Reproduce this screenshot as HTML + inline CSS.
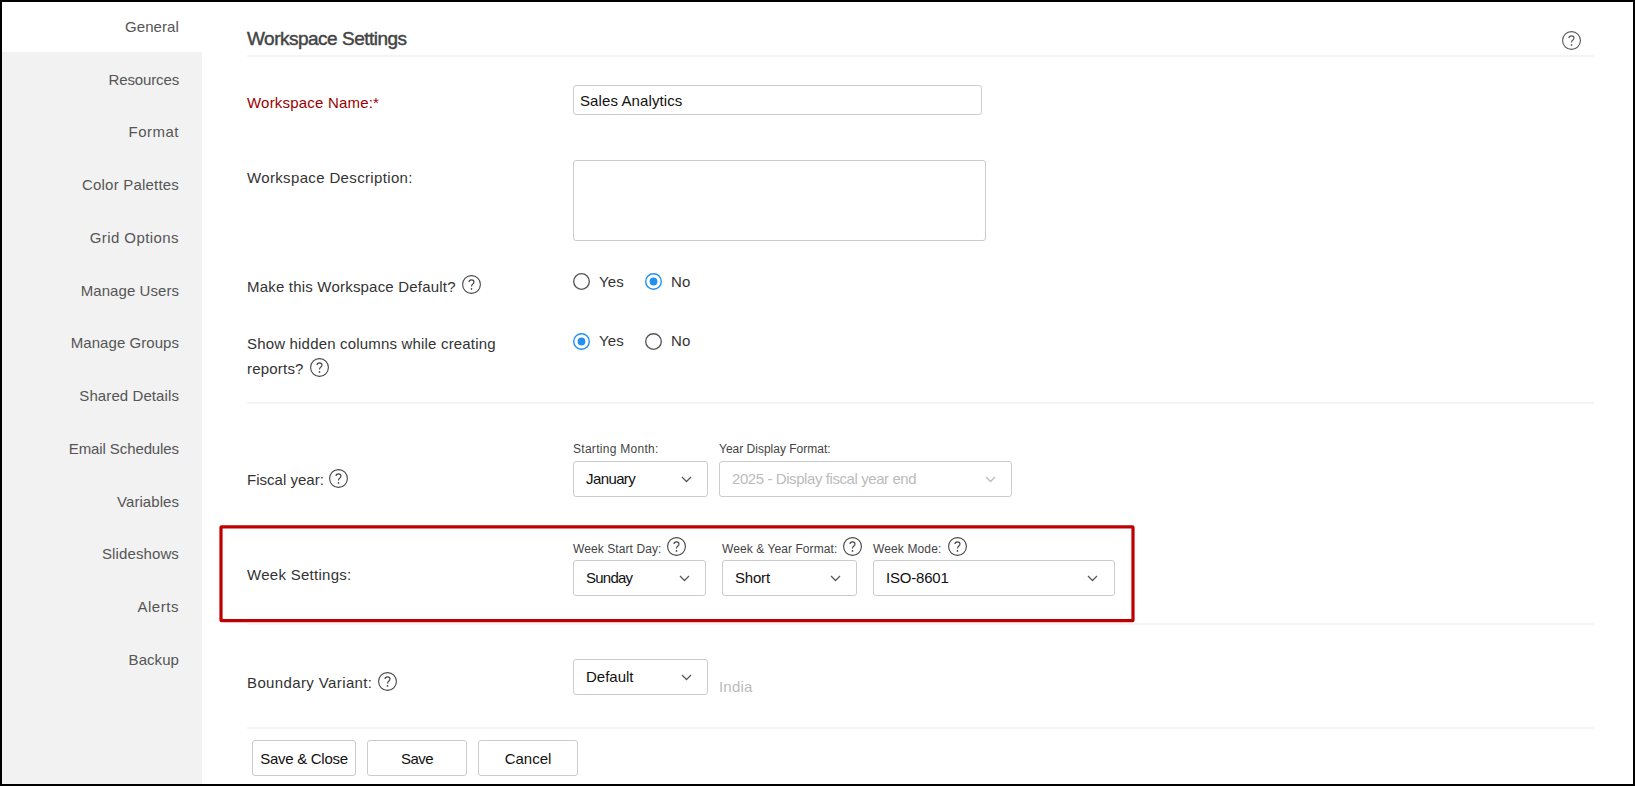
<!DOCTYPE html>
<html><head><meta charset="utf-8">
<style>
*{box-sizing:border-box;margin:0;padding:0}
html,body{width:1635px;height:786px;overflow:hidden;background:#000}
body{font-family:"Liberation Sans",sans-serif;position:relative}
#frame{position:absolute;left:2px;top:2px;width:1631px;height:782px;background:#fff;overflow:hidden}
.a{position:absolute;white-space:nowrap;line-height:1}
#side{position:absolute;left:0;top:50px;width:200px;height:740px;background:#f2f2f2}
.si{position:absolute;font-size:15px;color:#555;text-align:right;letter-spacing:0.2px}
.lbl{font-size:15px;color:#333;letter-spacing:0.2px}
.sep{position:absolute;left:245px;width:1347px;height:2px;background:#f4f4f4}
.box{position:absolute;border:1px solid #ccc;border-radius:3px;background:#fff}
.sel .t{position:absolute;left:12px;font-size:15px;color:#111;white-space:nowrap;line-height:1}
.chev{position:absolute}
.sm{font-size:12px;color:#444}
.q{position:absolute;width:19px;height:19px}.q svg{display:block}
.radio{position:absolute;width:17px;height:17px}.radio svg{display:block}
.btn{position:absolute;top:738px;height:36px;border:1px solid #ccc;border-radius:3px;background:#fff;font-size:15px;color:#111;text-align:center;line-height:35px}
</style></head>
<body>
<div id="frame">
  <div id="side"></div>
  <div class="a si" style="top:17px;right:1454px;letter-spacing:0.1px">General</div>
  <div class="a si" style="top:70px;right:1454px;letter-spacing:-0.13px">Resources</div>
  <div class="a si" style="top:122px;right:1454px;letter-spacing:0.48px">Format</div>
  <div class="a si" style="top:175px;right:1454px;letter-spacing:0.2px">Color Palettes</div>
  <div class="a si" style="top:228px;right:1454px;letter-spacing:0.43px">Grid Options</div>
  <div class="a si" style="top:281px;right:1454px;letter-spacing:0.06px">Manage Users</div>
  <div class="a si" style="top:333px;right:1454px;letter-spacing:0.05px">Manage Groups</div>
  <div class="a si" style="top:386px;right:1454px;letter-spacing:0.09px">Shared Details</div>
  <div class="a si" style="top:439px;right:1454px;letter-spacing:-0.1px">Email Schedules</div>
  <div class="a si" style="top:492px;right:1454px;letter-spacing:0.06px">Variables</div>
  <div class="a si" style="top:544px;right:1454px;letter-spacing:0.12px">Slideshows</div>
  <div class="a si" style="top:597px;right:1454px;letter-spacing:0.54px">Alerts</div>
  <div class="a si" style="top:650px;right:1454px;letter-spacing:0.06px">Backup</div>

  <div class="a" style="left:245px;top:27px;font-size:19px;letter-spacing:-0.5px;-webkit-text-stroke:0.45px #444;color:#444">Workspace Settings</div>
  <div class="q" style="left:1560px;top:29px"><svg width="19" height="19" viewBox="0 0 19 19"><circle cx="9.5" cy="9.5" r="8.9" fill="none" stroke="#555" stroke-width="1.1"/><path d="M7 7.1C7 5.7 8.1 4.9 9.5 4.9C10.9 4.9 12 5.8 12 7C12 8.1 11.3 8.7 10.6 9.2C9.9 9.8 9.5 10.4 9.5 11.5V11.3" fill="none" stroke="#555" stroke-width="1.15"/><circle cx="9.5" cy="13.95" r="0.85" fill="#555"/></svg></div>
  <div class="sep" style="top:53px"></div>

  <div class="a lbl" style="left:245px;top:93px;color:#9c0000">Workspace Name:*</div>
  <div class="box" style="left:571px;top:83px;width:409px;height:30px"></div>
  <div class="a" style="left:578px;top:91px;font-size:15px;color:#111;letter-spacing:0.1px">Sales Analytics</div>

  <div class="a lbl" style="left:245px;top:168px;letter-spacing:0.35px">Workspace Description:</div>
  <div class="box" style="left:571px;top:158px;width:413px;height:81px"></div>

  <div class="a lbl" style="left:245px;top:277px;letter-spacing:0.2px">Make this Workspace Default?</div>
  <div class="q" style="left:460px;top:273px"><svg width="19" height="19" viewBox="0 0 19 19"><circle cx="9.5" cy="9.5" r="8.9" fill="none" stroke="#444" stroke-width="1.1"/><path d="M7 7.1C7 5.7 8.1 4.9 9.5 4.9C10.9 4.9 12 5.8 12 7C12 8.1 11.3 8.7 10.6 9.2C9.9 9.8 9.5 10.4 9.5 11.5V11.3" fill="none" stroke="#444" stroke-width="1.15"/><circle cx="9.5" cy="13.95" r="0.85" fill="#444"/></svg></div>
  <div class="radio" style="left:571px;top:271px"><svg width="17" height="17"><circle cx="8.5" cy="8.5" r="7.8" fill="#fff" stroke="#555" stroke-width="1.35"/></svg></div>
  <div class="a lbl" style="left:597px;top:272px">Yes</div>
  <div class="radio" style="left:643px;top:271px"><svg width="17" height="17"><circle cx="8.5" cy="8.5" r="7.8" fill="#fff" stroke="#2491ef" stroke-width="1.4"/><circle cx="8.5" cy="8.5" r="3.9" fill="#2491ef"/></svg></div>
  <div class="a lbl" style="left:669px;top:272px">No</div>

  <div class="a lbl" style="left:245px;top:334px;letter-spacing:0.18px">Show hidden columns while creating</div>
  <div class="a lbl" style="left:245px;top:359px;letter-spacing:0.2px">reports?</div>
  <div class="q" style="left:308px;top:356px"><svg width="19" height="19" viewBox="0 0 19 19"><circle cx="9.5" cy="9.5" r="8.9" fill="none" stroke="#444" stroke-width="1.1"/><path d="M7 7.1C7 5.7 8.1 4.9 9.5 4.9C10.9 4.9 12 5.8 12 7C12 8.1 11.3 8.7 10.6 9.2C9.9 9.8 9.5 10.4 9.5 11.5V11.3" fill="none" stroke="#444" stroke-width="1.15"/><circle cx="9.5" cy="13.95" r="0.85" fill="#444"/></svg></div>
  <div class="radio" style="left:571px;top:331px"><svg width="17" height="17"><circle cx="8.5" cy="8.5" r="7.8" fill="#fff" stroke="#2491ef" stroke-width="1.4"/><circle cx="8.5" cy="8.5" r="3.9" fill="#2491ef"/></svg></div>
  <div class="a lbl" style="left:597px;top:331px">Yes</div>
  <div class="radio" style="left:643px;top:331px"><svg width="17" height="17"><circle cx="8.5" cy="8.5" r="7.8" fill="#fff" stroke="#555" stroke-width="1.35"/></svg></div>
  <div class="a lbl" style="left:669px;top:331px">No</div>

  <div class="sep" style="top:400px"></div>

  <div class="a lbl" style="left:245px;top:470px;letter-spacing:0.02px">Fiscal year:</div>
  <div class="q" style="left:327px;top:467px"><svg width="19" height="19" viewBox="0 0 19 19"><circle cx="9.5" cy="9.5" r="8.9" fill="none" stroke="#444" stroke-width="1.1"/><path d="M7 7.1C7 5.7 8.1 4.9 9.5 4.9C10.9 4.9 12 5.8 12 7C12 8.1 11.3 8.7 10.6 9.2C9.9 9.8 9.5 10.4 9.5 11.5V11.3" fill="none" stroke="#444" stroke-width="1.15"/><circle cx="9.5" cy="13.95" r="0.85" fill="#444"/></svg></div>
  <div class="a sm" style="left:571px;top:441px;letter-spacing:0.28px">Starting Month:</div>
  <div class="a sm" style="left:717px;top:441px">Year Display Format:</div>
  <div class="box sel" style="left:571px;top:459px;width:135px;height:36px"><span class="t" style="top:9px;letter-spacing:-0.6px">January</span><svg class="chev" style="left:107px;top:14px" width="12" height="8"><path d="M1 1L5.5 5.5L10 1" fill="none" stroke="#5a5a5a" stroke-width="1.3"/></svg></div>
  <div class="box sel" style="left:717px;top:459px;width:293px;height:36px"><span class="t" style="top:9px;color:#bbb;letter-spacing:-0.42px">2025 - Display fiscal year end</span><svg class="chev" style="left:265px;top:14px" width="12" height="8"><path d="M1 1L5.5 5.5L10 1" fill="none" stroke="#bbb" stroke-width="1.3"/></svg></div>

  <div class="sep" style="top:621px"></div>
  <div class="a lbl" style="left:245px;top:565px;letter-spacing:0.28px">Week Settings:</div>
  <div class="a sm" style="left:571px;top:541px;letter-spacing:0.09px">Week Start Day:</div>
  <div class="q" style="left:665px;top:535px"><svg width="19" height="19" viewBox="0 0 19 19"><circle cx="9.5" cy="9.5" r="8.9" fill="none" stroke="#444" stroke-width="1.1"/><path d="M7 7.1C7 5.7 8.1 4.9 9.5 4.9C10.9 4.9 12 5.8 12 7C12 8.1 11.3 8.7 10.6 9.2C9.9 9.8 9.5 10.4 9.5 11.5V11.3" fill="none" stroke="#444" stroke-width="1.15"/><circle cx="9.5" cy="13.95" r="0.85" fill="#444"/></svg></div>
  <div class="a sm" style="left:720px;top:541px;letter-spacing:0.08px">Week &amp; Year Format:</div>
  <div class="q" style="left:841px;top:535px"><svg width="19" height="19" viewBox="0 0 19 19"><circle cx="9.5" cy="9.5" r="8.9" fill="none" stroke="#444" stroke-width="1.1"/><path d="M7 7.1C7 5.7 8.1 4.9 9.5 4.9C10.9 4.9 12 5.8 12 7C12 8.1 11.3 8.7 10.6 9.2C9.9 9.8 9.5 10.4 9.5 11.5V11.3" fill="none" stroke="#444" stroke-width="1.15"/><circle cx="9.5" cy="13.95" r="0.85" fill="#444"/></svg></div>
  <div class="a sm" style="left:871px;top:541px;letter-spacing:0.13px">Week Mode:</div>
  <div class="q" style="left:946px;top:535px"><svg width="19" height="19" viewBox="0 0 19 19"><circle cx="9.5" cy="9.5" r="8.9" fill="none" stroke="#444" stroke-width="1.1"/><path d="M7 7.1C7 5.7 8.1 4.9 9.5 4.9C10.9 4.9 12 5.8 12 7C12 8.1 11.3 8.7 10.6 9.2C9.9 9.8 9.5 10.4 9.5 11.5V11.3" fill="none" stroke="#444" stroke-width="1.15"/><circle cx="9.5" cy="13.95" r="0.85" fill="#444"/></svg></div>
  <div class="box sel" style="left:571px;top:558px;width:133px;height:36px"><span class="t" style="top:9px;letter-spacing:-0.75px">Sunday</span><svg class="chev" style="left:105px;top:14px" width="12" height="8"><path d="M1 1L5.5 5.5L10 1" fill="none" stroke="#5a5a5a" stroke-width="1.3"/></svg></div>
  <div class="box sel" style="left:720px;top:558px;width:135px;height:36px"><span class="t" style="top:9px;letter-spacing:-0.2px">Short</span><svg class="chev" style="left:107px;top:14px" width="12" height="8"><path d="M1 1L5.5 5.5L10 1" fill="none" stroke="#5a5a5a" stroke-width="1.3"/></svg></div>
  <div class="box sel" style="left:871px;top:558px;width:242px;height:36px"><span class="t" style="top:9px;letter-spacing:-0.2px">ISO-8601</span><svg class="chev" style="left:213px;top:14px" width="12" height="8"><path d="M1 1L5.5 5.5L10 1" fill="none" stroke="#5a5a5a" stroke-width="1.3"/></svg></div>
  <svg style="position:absolute;left:0;top:0" width="1631" height="782"><rect x="219" y="524.95" width="912" height="93.75" rx="0.5" fill="none" stroke="#bf0000" stroke-width="3.2"/></svg>

  <div class="a lbl" style="left:245px;top:673px;letter-spacing:0.38px">Boundary Variant:</div>
  <div class="q" style="left:376px;top:670px"><svg width="19" height="19" viewBox="0 0 19 19"><circle cx="9.5" cy="9.5" r="8.9" fill="none" stroke="#444" stroke-width="1.1"/><path d="M7 7.1C7 5.7 8.1 4.9 9.5 4.9C10.9 4.9 12 5.8 12 7C12 8.1 11.3 8.7 10.6 9.2C9.9 9.8 9.5 10.4 9.5 11.5V11.3" fill="none" stroke="#444" stroke-width="1.15"/><circle cx="9.5" cy="13.95" r="0.85" fill="#444"/></svg></div>
  <div class="box sel" style="left:571px;top:657px;width:135px;height:36px"><span class="t" style="top:9px">Default</span><svg class="chev" style="left:107px;top:14px" width="12" height="8"><path d="M1 1L5.5 5.5L10 1" fill="none" stroke="#5a5a5a" stroke-width="1.3"/></svg></div>
  <div class="a" style="left:717px;top:677px;font-size:15px;color:#bbb;letter-spacing:0.2px">India</div>

  <div class="sep" style="top:725px"></div>
  <div class="btn" style="left:250px;width:104px;letter-spacing:-0.29px">Save &amp; Close</div>
  <div class="btn" style="left:365px;width:100px;letter-spacing:-0.6px">Save</div>
  <div class="btn" style="left:476px;width:100px">Cancel</div>
</div>
</body></html>
